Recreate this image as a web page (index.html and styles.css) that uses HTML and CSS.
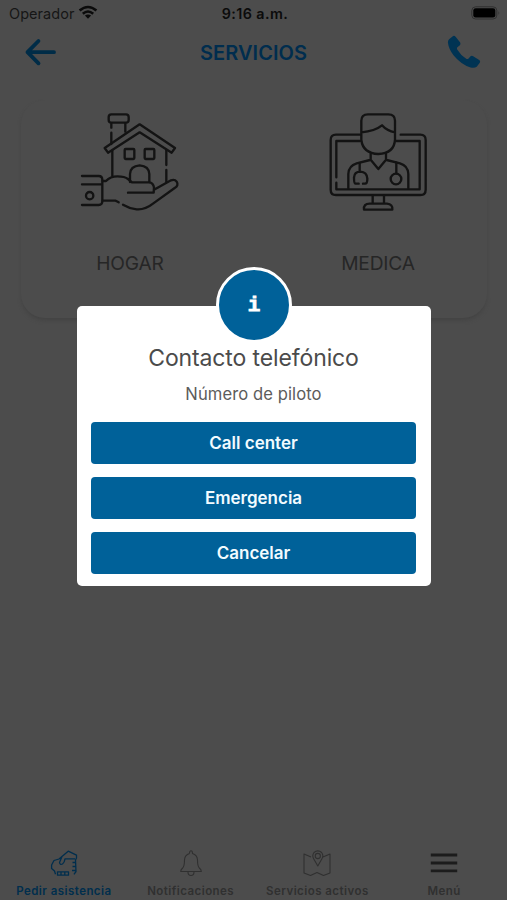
FILE: index.html
```html
<!DOCTYPE html>
<html lang="es">
<head>
<meta charset="utf-8">
<title>Servicios</title>
<link rel="stylesheet" href="styles.css">
</head>
<body>
<div class="app">
  <div class="status">
    <div class="carrier"><span>Operador</span>
      <svg width="20" height="15" viewBox="0 0 20 15"><g fill="none" stroke="#0b0b0b" stroke-width="2.6"><path d="M1.6 5.5Q10-1.5 18.4 5.5"/><path d="M4.8 8.7Q10 4.3 15.2 8.7"/></g><path d="M6.9 10.6Q10 8.3 13.1 10.6L10 13.8Z" fill="#0b0b0b"/></svg>
    </div>
    <div class="time">9:16 a.m.</div>
    <svg class="battery" width="30" height="14" viewBox="0 0 30 14"><rect x=".8" y=".8" width="25" height="12.2" rx="3.8" fill="none" stroke="#303030"/><rect x="2.3" y="2.3" width="22" height="9.2" rx="2.3" fill="#000"/><path d="M27.5 5q1.6 2 0 4Z" fill="#303030"/></svg>
  </div>
  <header class="header">
    <svg width="32" height="28" viewBox="0 0 32 28" fill="none" stroke="#002c47" stroke-width="3.8" stroke-linecap="round" stroke-linejoin="round"><path d="M14.5 3L3.5 14.2L14.5 25.3M3.5 14.2H30"/></svg>
    <h1 class="title">SERVICIOS</h1>
    <svg width="34" height="34" viewBox="0 0 34 34"><path fill="#003353" d="M5.5 1.4Q7-.1 8.6 1.7L13 7.3Q14 9 12.6 10.4L10.4 12.3Q9.5 13.4 10.4 14.8Q13.7 20.5 19.2 23.7Q20.5 24.4 21.6 23.4L23.3 21.4Q24.6 20.2 26.2 21.2L32.2 25Q33.8 26.3 32.6 28L29.7 31.8Q27.5 33.4 23.6 32.5Q13.8 29.3 6.5 20.2Q1.7 14 1 8Q.7 5.5 2.1 4.2Z"/></svg>
  </header>
  <main class="card">
    <div class="service">
      <svg width="120" height="120" viewBox="0 0 360 360" class="line-icon">
        <rect x="116" y="43" width="60" height="25" rx="8"/>
        <path d="M124 70V83M124 98V132M166 70V95M127 152V228M289 150V195M289 210V246"/>
        <path d="M209 73L104 144L114 158L209 97L305 158L315 144Z"/>
        <rect x="164" y="147" width="29" height="30" rx="3"/><rect x="224" y="147" width="29" height="30" rx="3"/>
        <path d="M180 246V222Q181 198 209 196Q237 198 238 222V246"/>
        <path d="M36 228H86Q97 228 97 240V304Q97 315 86 315H36M36 253H97"/><circle cx="59" cy="287" r="11"/>
        <path d="M98 243H108Q121 229 142 229Q164 229 174 237L186 247H237Q250 248 252 263L251 278H174M252 269L303 241Q314 237 320 245Q327 256 314 264L249 311Q225 330 200 328Q177 325 159 314M98 302H137L146 307"/>
      </svg>
      <div class="service-name">HOGAR</div>
    </div>
    <div class="service">
      <svg width="120" height="120" viewBox="0 0 360 360" class="line-icon">
        <path d="M130 124V62Q130 43 150 43H211Q231 43 231 62V119Q229 160 181 162Q135 160 130 120M130 97Q171 93 192 76Q207 93 231 97"/>
        <path d="M126 104H54Q38 104 38 120V269Q38 285 54 285H307Q323 285 323 269V120Q323 104 307 104H248M126 123H55V232M55 248V268H305V123H235"/>
        <path d="M158 161V179L181 207L204 179V161M156 180L116 190Q92 197 91 222V265M206 180L246 190Q270 197 271 222V265"/>
        <path d="M125 190V215M122 251H113Q108 251 108 233Q109 215 127 215Q147 216 148 236Q148 251 141 251H135M235 188V220"/><circle cx="234" cy="237" r="16"/>
        <path d="M164 287V311M198 287V311M138 329Q136 311 155 311H207Q225 313 223 329Z"/>
      </svg>
      <div class="service-name">MEDICA</div>
    </div>
  </main>
  <nav class="tabs">
    <div class="tab active">
      <svg width="28" height="28" viewBox="0 0 28 28"><path d="M5.5 25.3L4.5 22L1.6 19.5V16L4 11.5L9 10L18.2 2.2L26.5 6.2V9L25.5 11L26 22.5L24 25.3M18.5 9.8H25M12 7.5L9.5 13.5Q10 16.3 12.5 15Q14.5 13.5 15 9.8H19M7.5 22.8H18.5V26.2H7.5ZM11 22.8V26.2M14.8 22.8V26.2M22.5 13.5H25.5M22.5 17.5H25.5M22 21.5H25.5"/></svg>
      <span>Pedir asistencia</span>
    </div>
    <div class="tab bell">
      <svg width="28" height="28" viewBox="0 0 28 28"><path d="M12.5 4.5Q12.5 1.7 14 1.7T15.5 4.5Q20.3 6 20.5 11Q20.5 17 22.3 19Q24.3 20.5 24.3 22.5H3.7Q3.7 20.5 5.7 19Q7.5 17 7.5 11Q7.7 6 12.5 4.5M11 23Q11 26.5 14 26.5T17 23"/></svg>
      <span>Notificaciones</span>
    </div>
    <div class="tab map">
      <svg width="28" height="28" viewBox="0 0 28 28"><path d="M8 8L1 5V24L7.5 26.5L14 23.5L20.5 26.5L27 24V5L20 8M14.8 17L10.8 10Q8.7 6.5 11 3.5Q14.8.2 18.6 3.5Q21 6.5 18.8 10Z"/><circle cx="14.8" cy="7" r="2.6"/></svg>
      <span>Servicios activos</span>
    </div>
    <div class="tab menu">
      <svg width="28" height="28" viewBox="0 0 28 28"><path d="M.8 6H27.2M.8 14H27.2M.8 21.8H27.2"/></svg>
      <span>Menú</span>
    </div>
  </nav>
</div>
<div class="overlay">
  <section class="dialog">
    <div class="badge">i</div>
    <h2 class="dialog-title">Contacto telefónico</h2>
    <p class="dialog-text">Número de piloto</p>
    <div class="actions">
      <button class="btn">Call center</button>
      <button class="btn">Emergencia</button>
      <button class="btn">Cancelar</button>
    </div>
  </section>
</div>
</body>
</html>
```
FILE: styles.css
```css
* { box-sizing: border-box; }
body { margin: 0; background: #4c4c4c; font-family: Inter, "Liberation Sans", sans-serif; }
svg { display: block; flex: none; }
.app { width: 507px; height: 900px; display: flex; flex-direction: column; overflow: hidden; }
.status { height: 28px; display: grid; grid-template-columns: 1fr auto 1fr; align-items: center; padding: 0 6px 0 9px; color: #0b0b0b; font-size: 14.5px; }
.carrier { display: flex; align-items: center; gap: 4px; margin-top: -2px; color: #161616; letter-spacing: 0.05px; }
.carrier svg { margin-top: -1px; }
.time { margin-top: -2px; font-weight: 600; font-size: 14.3px; letter-spacing: 0.45px; }
.battery { justify-self: end; margin-top: -2px; }
.header { height: 48px; display: flex; align-items: center; justify-content: space-between; padding: 0 26px 0 24px; }
.title { margin: 1px 0 0; padding-left: 4px; font-size: 20px; font-weight: 600; color: #002d4e; letter-spacing: 0.05px; }
.card { width: 466px; height: 218px; margin: 24px 0 0 21px; border-radius: 24px; display: grid; grid-template-columns: 248px 248px; justify-content: center; box-shadow: 0 3px 4px -1px #424242; background: #4c4c4c; }
.service { display: flex; flex-direction: column; align-items: center; }
.line-icon { fill: none; stroke: #131313; stroke-width: 7; stroke-linecap: round; stroke-linejoin: round; }
.service-name { margin-top: 31px; font-size: 19.2px; line-height: 24px; color: #262626; letter-spacing: -0.2px; }
.tabs { margin-top: auto; height: 51px; display: grid; grid-template-columns: repeat(4, 1fr); }
.tab { display: flex; flex-direction: column; align-items: center; font-size: 11.5px; font-weight: 600; line-height: 16px; color: #303030; white-space: nowrap; letter-spacing: 0.45px; }
.tab svg { fill: none; stroke: #303030; stroke-width: 1.1; stroke-linejoin: round; }
.tab svg, .tab span { margin-left: 1px; }
.tab span { margin-top: 6px; }
.tab.active { color: #002e4d; }
.tab.active svg { stroke: #002e4d; stroke-width: 1.3; }
.tab.menu svg { stroke: #1c1c1c; stroke-width: 2.8; }
.overlay { position: absolute; top: 0; left: 0; width: 507px; height: 900px; padding: 306px 0 0 77px; overflow: hidden; }
.dialog { position: relative; width: 354px; height: 280px; background: #fff; border-radius: 5px; padding: 37px 15px 0 14px; text-align: center; }
.badge { position: absolute; left: 139px; top: -39px; width: 76px; height: 76px; border-radius: 50%; border: 3.5px solid #fff; background: #006199; color: #fff; font: bold 21px/71px "Liberation Mono", monospace; -webkit-text-stroke: 0.8px #fff; }
.dialog-title { margin: 0; font-size: 23px; line-height: 31px; font-weight: 400; color: #4b4b4b; letter-spacing: -0.12px; }
.dialog-text { margin: 9px 0 0; font-size: 16.6px; line-height: 22px; color: #5c5c5c; letter-spacing: 0.08px; }
.actions { display: flex; flex-direction: column; gap: 12.4px; margin-top: 16.6px; }
.btn { height: 42.6px; padding: 0; border: 0; border-radius: 4px; background: #006199; color: #f2fbff; font: 600 17px/42px Inter, sans-serif; }
```
